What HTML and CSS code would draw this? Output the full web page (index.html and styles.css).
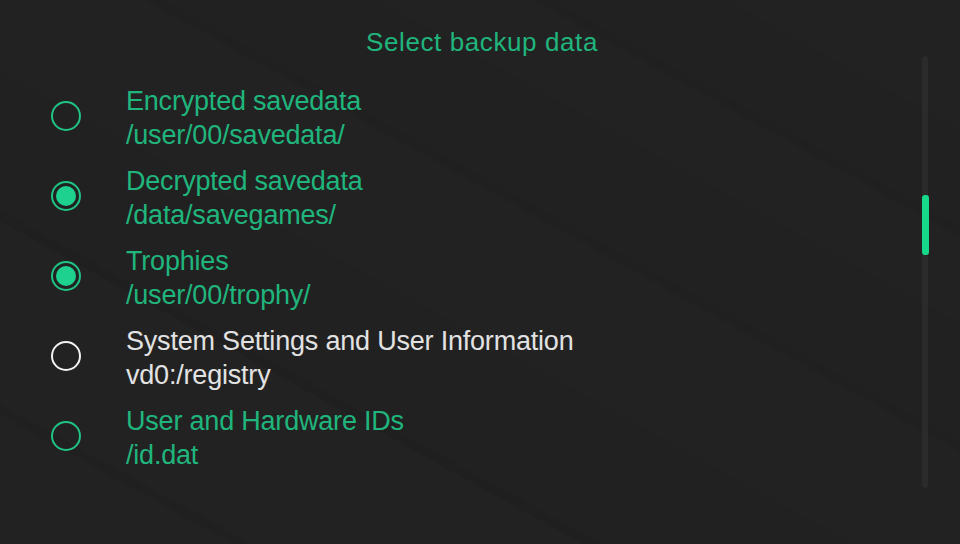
FILE: index.html
```html
<html>
<head>
    <link rel="stylesheet" href="styles.css">
</head>
<body>

<div class="screen">
  <div class="main">
    <div class="title">Select backup data</div>

    <div class="list">
      <div class="row">
        <span class="radio"></span>
        <div class="label">
          <div>Encrypted savedata</div>
          <div>/user/00/savedata/</div>
        </div>
      </div>
      <div class="row">
        <span class="radio on"></span>
        <div class="label">
          <div>Decrypted savedata</div>
          <div>/data/savegames/</div>
        </div>
      </div>
      <div class="row">
        <span class="radio on"></span>
        <div class="label">
          <div>Trophies</div>
          <div>/user/00/trophy/</div>
        </div>
      </div>
      <div class="row focus">
        <span class="radio"></span>
        <div class="label">
          <div>System Settings and User Information</div>
          <div>vd0:/registry</div>
        </div>
      </div>
      <div class="row">
        <span class="radio"></span>
        <div class="label">
          <div>User and Hardware IDs</div>
          <div>/id.dat</div>
        </div>
      </div>
    </div>
  </div>

  <div class="scroll">
    <div class="track"><div class="thumb"></div></div>
  </div>
</div>

</body>
</html>
```

FILE: styles.css
```css
body { margin: 0; background: #222222; font-family: "Liberation Sans", Arial, sans-serif; }
.screen {
  width: 960px; height: 544px; display: flex; overflow: hidden;
  background:
    linear-gradient(29deg, transparent 0 30%, rgba(0,0,0,0.08) 30% 31%, rgba(0,0,0,0.04) 31% 44%, transparent 44%),
    linear-gradient(29deg, transparent 0 58%, rgba(0,0,0,0.07) 58% 59%, rgba(0,0,0,0.04) 59% 70%, transparent 70%),
    linear-gradient(29deg, transparent 0 78%, rgba(0,0,0,0.07) 78% 79%, rgba(0,0,0,0.04) 79% 88%, transparent 88%),
    linear-gradient(29deg, transparent 0 12%, rgba(0,0,0,0.06) 12% 13%, transparent 13%),
    #232223;
}
.main { flex: 1; }
.title { text-align: center; color: #1fb57c; font-size: 26px; line-height: 33px; padding-top: 26px; padding-left: 42px; letter-spacing: 0.6px; }
.list { padding: 17px 0 0 51px; }
.row { display: flex; align-items: center; height: 80px; gap: 45px; }
.label { color: #1fb57c; font-size: 27px; line-height: 34px; letter-spacing: -0.2px; padding-top: 4px; }
.focus .label { color: #e2e2e2; }
.radio { width: 26px; height: 26px; border: 2px solid #1fc486; border-radius: 50%; flex: none; position: relative; }
.focus .radio { border-color: #f2f2f2; }
.radio.on::after { content: ""; position: absolute; left: 3px; top: 3px; width: 20px; height: 20px; border-radius: 50%; background: #1ed18f; }
.scroll { width: 38px; padding-top: 56px; }
.track { width: 6px; height: 432px; background: #2b2b2b; border-radius: 3px; position: relative; }
.thumb { position: absolute; left: 0; top: 139px; width: 7px; height: 60px; border-radius: 3px; background: #17d98a; }
```
